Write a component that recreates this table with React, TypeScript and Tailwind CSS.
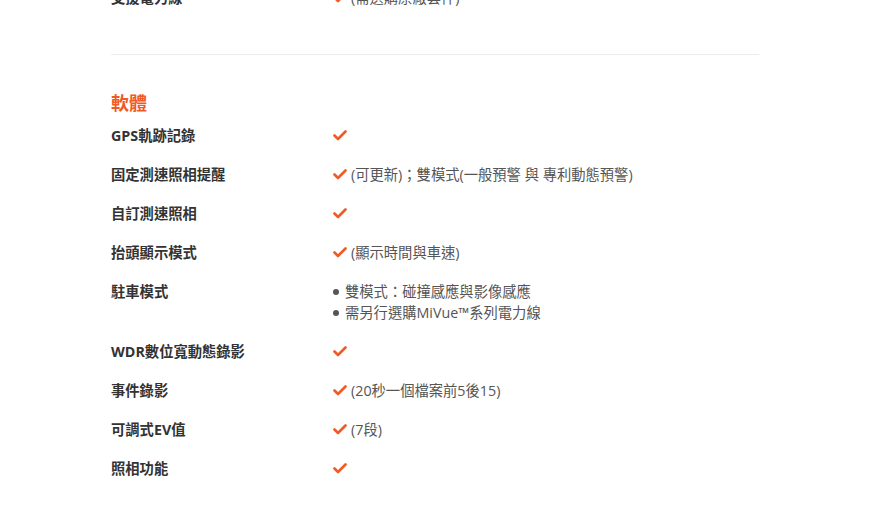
const ORANGE = '#f15a24'

type Row = { label: string; value?: string; lines?: string[] }

const ROWS: Row[] = [
  { label: 'GPS軌跡記錄' },
  { label: '固定測速照相提醒', value: '(可更新)；雙模式(一般預警 與 專利動態預警)' },
  { label: '自訂測速照相' },
  { label: '抬頭顯示模式', value: '(顯示時間與車速)' },
  { label: '駐車模式', lines: ['雙模式：碰撞感應與影像感應', '需另行選購MiVue™系列電力線'] },
  { label: 'WDR數位寬動態錄影' },
  { label: '事件錄影', value: '(20秒一個檔案前5後15)' },
  { label: '可調式EV值', value: '(7段)' },
  { label: '照相功能' },
]

function Check() {
  return (
    <svg width="14" height="11" viewBox="0 0 14 11" className="mr-1 inline-block shrink-0">
      <path
        d="M1.5 5.5 L5 9 L12.5 1.5"
        fill="none"
        stroke={ORANGE}
        strokeWidth="2.6"
        strokeLinecap="round"
        strokeLinejoin="round"
      />
    </svg>
  )
}

function SpecRow({ row }: { row: Row }) {
  return (
    <div className="flex py-[9px] text-[14.3px] leading-[21px]">
      <div className="w-[222px] shrink-0 font-bold text-[#333]">{row.label}</div>
      <div className="text-[#555]">
        {row.lines ? (
          row.lines.map((l) => (
            <div key={l} className="flex items-center">
              <span className="mr-[6px] inline-block h-[6px] w-[6px] rounded-full bg-[#555]" />
              {l}
            </div>
          ))
        ) : (
          <div className="flex min-h-[21px] items-center">
            <Check />
            {row.value}
          </div>
        )}
      </div>
    </div>
  )
}

export default function App() {
  return (
    <div
      className="h-[510px] overflow-hidden bg-white"
      style={{ fontFamily: '"Open Sans", "Noto Sans CJK TC", sans-serif' }}
    >
      <div className="ml-[111px] w-[648px]">
        <div className="-mt-[22px]">
          <SpecRow row={{ label: '支援電力線', value: '(需選購原廠套件)' }} />
        </div>
        <div className="mt-[37px] h-px bg-[#ececec]" />
        <h2 className="mt-[35px] text-[18px] font-bold leading-[26px]" style={{ color: ORANGE }}>
          軟體
        </h2>
        {ROWS.map((r) => (
          <SpecRow key={r.label} row={r} />
        ))}
      </div>
    </div>
  )
}
